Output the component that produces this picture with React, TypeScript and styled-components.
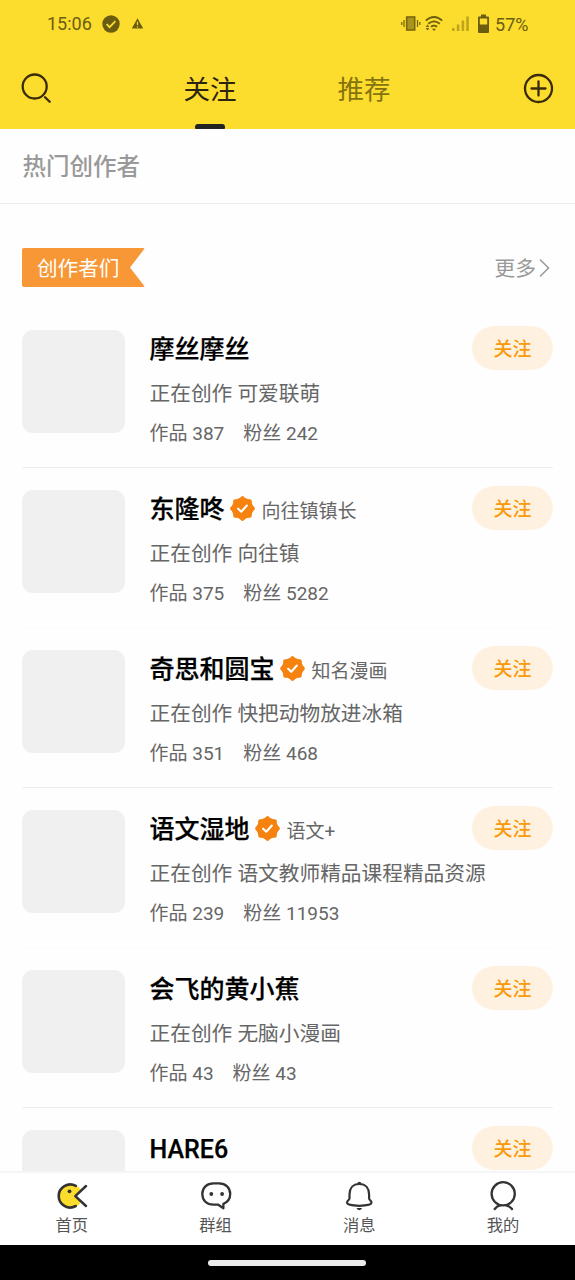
import React from "react";
import styled, { createGlobalStyle } from "styled-components";

const GlobalStyle = createGlobalStyle`
  * { box-sizing: border-box; }
  body {
    margin: 0;
    background: #fff;
    font-family: Roboto, "Noto Sans CJK SC", sans-serif;
  }
`;

const Screen = styled.div`
  width: 575px;
  height: 1280px;
  display: flex;
  flex-direction: column;
  overflow: hidden;
  background: #fefefe;
`;

const Header = styled.header`
  height: 129px;
  flex: none;
  background: #fcdc2c;
`;

const StatusBar = styled.div`
  height: 48px;
  display: flex;
  align-items: center;
  justify-content: space-between;
  padding: 0 47px;
  font-size: 18px;
  line-height: 48px;
  color: #6b5d10;
`;

const StatusLeft = styled.div`
  display: flex;
  align-items: center;
  svg:first-of-type { margin-left: 10.5px; }
  svg:last-of-type { margin-left: 10.5px; }
`;

const StatusRight = styled.div`
  display: flex;
  align-items: center;
`;

const BatteryText = styled.span`
  margin-left: 5px;
  margin-right: -0.5px;
  padding-top: 1px;
`;

const TopNav = styled.div`
  height: 81px;
  display: flex;
  align-items: flex-start;
  justify-content: space-between;
  padding: 0 21px 0 20px;
`;

const IconButton = styled.button`
  width: 34px;
  height: 80px;
  padding: 0;
  border: 0;
  background: none;
  display: flex;
  align-items: center;
`;

const Tabs = styled.nav`
  display: flex;
  gap: 101px;
`;

const Tab = styled.div<{ $active?: boolean }>`
  height: 81px;
  display: flex;
  flex-direction: column;
  align-items: center;
  justify-content: space-between;
  font-size: 26.5px;
  line-height: 83px;
  color: ${(p) => (p.$active ? "#2b2410" : "#84730f")};
`;

const TabLabel = styled.span`
  height: 76px;
`;

const TabBar = styled.i`
  width: 30px;
  height: 5px;
  border-radius: 3px 3px 1px 1px;
  background: #222;
`;

const SectionTitle = styled.h2`
  margin: 0;
  height: 75px;
  flex: none;
  padding: 0 22.5px;
  border-bottom: 1px solid #ededed;
  font-size: 23.5px;
  font-weight: 500;
  line-height: 77px;
  color: #999;
`;

const Feed = styled.main`
  flex: 1;
  min-height: 0;
  overflow: hidden;
  padding: 44px 22px 0;
`;

const GroupHead = styled.div`
  height: 39px;
  margin-bottom: 21px;
  display: flex;
  align-items: center;
  justify-content: space-between;
`;

const Ribbon = styled.div`
  width: 123px;
  height: 39px;
  padding-left: 15px;
  border-radius: 2px;
  background: #f79736;
  clip-path: polygon(0 0, 100% 0, 108px 50%, 100% 100%, 0 100%);
  color: #fff;
  font-size: 20.6px;
  line-height: 43px;
`;

const More = styled.div`
  display: flex;
  align-items: center;
  gap: 3px;
  margin-right: 3px;
  font-size: 20.7px;
  color: #999;
`;

const MoreLabel = styled.span`
  height: 39px;
  line-height: 43px;
`;

const Row = styled.article<{ $line: string }>`
  height: 160px;
  padding-top: 22px;
  display: flex;
  align-items: flex-start;
  border-bottom: 1px solid ${(p) => p.$line};
`;

const Avatar = styled.div`
  width: 103px;
  height: 102.5px;
  flex: none;
  border-radius: 11px;
  background: #f0f0f0;
`;

const Info = styled.div`
  flex: 1;
  min-width: 0;
  margin-left: 24.5px;
  white-space: nowrap;
`;

const NameLine = styled.div`
  height: 37px;
  display: flex;
  align-items: center;
`;

const Name = styled.strong`
  padding-top: 3px;
  font-size: 25px;
  font-weight: 500;
  line-height: 36px;
  color: #000;
  -webkit-text-stroke: 0.25px #000;
`;

const Title = styled.span`
  margin-left: 6px;
  padding-top: 6px;
  font-size: 19px;
  line-height: 32px;
  color: #666;
`;

const Work = styled.div`
  margin-top: 12px;
  font-size: 20.7px;
  line-height: 30px;
  color: #666;
`;

const Stats = styled.div`
  display: flex;
  gap: 19px;
  margin-top: 10px;
  font-size: 19px;
  line-height: 30px;
  color: #666;
`;

const Follow = styled.button`
  width: 81px;
  height: 44px;
  margin-top: -4px;
  padding: 3px 0 0;
  flex: none;
  border: 0;
  border-radius: 22px;
  background: #fff1e0;
  color: #f99a0c;
  font-family: inherit;
  font-size: 19px;
  font-weight: 500;
  line-height: 41px;
`;

const BottomNav = styled.footer`
  height: 74px;
  flex: none;
  display: grid;
  grid-template-columns: repeat(4, 1fr);
  border-top: 2px solid #f6f6f6;
  background: #fff;
`;

const NavItem = styled.div`
  display: flex;
  flex-direction: column;
  align-items: center;
  padding-top: 6px;
  font-size: 16.3px;
  line-height: 26px;
  color: #555;
`;

const HomeBar = styled.div`
  height: 35px;
  flex: none;
  display: flex;
  justify-content: center;
  align-items: center;
  padding-right: 1px;
  background: #000;
`;

const HomePill = styled.i`
  width: 158px;
  height: 6px;
  border-radius: 3px;
  background: #ececec;
`;

const VerifiedSvg = styled.svg`
  margin: 0 -0.5px 0 4.5px;
  flex: none;
`;

const Verified = () => (
  <VerifiedSvg width="27" height="27" viewBox="0 0 26 26">
    <g fill="#f6820f">
      <circle cx="13" cy="13" r="10.300" />
      {Array.from({ length: 8 }, (_, i) => (
        <rect key={i} x="9.700" y="1.700" width="6.600" height="6.600" rx="1.900" transform={`rotate(${i * 45} 13 13) rotate(45 13 5)`} />
      ))}
    </g>
    <path d="m8.800 13.200 3 2.900 5.400-6" fill="none" stroke="#fff" strokeWidth="2" strokeLinecap="round" strokeLinejoin="round" />
  </VerifiedSvg>
);

const HomeIcon = () => (
  <svg width="34" height="34" viewBox="0 0 34 34" fill="none" strokeLinecap="round" strokeLinejoin="round">
    <path d="M20.300 17 26 11.200A12 12 0 1 0 26 22.800Z" fill="#fcdc2c" />
    <path d="M20.800 6.900A11.500 11.500 0 1 0 20.800 27" stroke="#333" strokeWidth="2.600" />
    <path d="M31 7 20.300 17.200 31 27" stroke="#333" strokeWidth="2.500" />
    <circle cx="14.500" cy="12.300" r="1.900" fill="#333" />
  </svg>
);

const GroupIcon = () => (
  <svg width="34" height="34" viewBox="0 0 34 34" fill="none" stroke="#333" strokeWidth="2.3" strokeLinejoin="round">
    <path d="M14.500 4.400H20C26.700 4.400 31.200 8.800 31.200 15.100C31.200 19.500 28.500 23.300 24.400 24.800V29.300L19.300 25.700H14.500C7.800 25.700 3.300 21.400 3.300 15.100C3.300 8.800 7.800 4.400 14.500 4.400Z" />
    <circle cx="12.300" cy="15" r="1.900" fill="#333" stroke="none" />
    <circle cx="23.100" cy="15" r="1.900" fill="#333" stroke="none" />
  </svg>
);

const BellIcon = () => (
  <svg width="34" height="34" viewBox="0 0 34 34" fill="none" stroke="#333" strokeWidth="2.2" strokeLinejoin="round">
    <path d="M17.300 5C10.900 5 7.500 9.500 7.500 15.500V19.500C7.300 21.300 5 21.400 5 23.800C5 25.500 9.500 26.800 17.300 26.800S29.500 25.500 29.500 23.800C29.500 21.400 27.300 21.300 27.100 19.500V15.500C27.100 9.500 23.700 5 17.300 5Z" />
    <path d="M15.300 4.700A2 2 0 0 1 19.300 4.700Z" fill="#333" stroke="none" />
    <path d="M14.500 29H20.100A2.900 2.900 0 0 1 14.500 29Z" fill="#333" stroke="none" />
  </svg>
);

const MeIcon = () => (
  <svg width="34" height="34" viewBox="0 0 34 34" fill="none" stroke="#333" strokeWidth="2.3" strokeLinecap="round">
    <circle cx="17.200" cy="14.800" r="11.600" />
    <path d="M8.700 30Q11 26.900 14.400 26.400M26 30Q23.700 26.900 20 26.400" />
  </svg>
);

const SearchIcon = () => (
  <svg width="34" height="34" viewBox="0 0 34 34" fill="none" stroke="#3a2c0b" strokeWidth="2.300" strokeLinecap="round">
    <circle cx="14.700" cy="15.500" r="12" />
    <path d="m25 26.200 4.700 4.600" />
  </svg>
);

const AddIcon = () => (
  <svg width="34" height="34" viewBox="0 0 34 34" fill="none" stroke="#3a2c0b" strokeWidth="2.300" strokeLinecap="round">
    <circle cx="18.500" cy="17.500" r="13.500" />
    <path d="M11.500 17.500H25.500M18.500 10.500V24.500" />
  </svg>
);

const StatusIconsLeft = () => (
  <>
    <svg width="18" height="18" viewBox="0 0 18 18">
      <circle cx="9" cy="9" r="8.700" fill="#6b5d10" />
      <path d="m4.600 9.200 3 3 5.800-6" fill="none" stroke="#fcdc2c" strokeWidth="1.800" />
    </svg>
    <svg width="13" height="12" viewBox="0 0 13 12">
      <path d="M6.500.3 12.200 10.500H.8Z" fill="#6b5d10" />
      <path d="M6.500 3.700V7M6.500 8.200V9.400" stroke="#fcdc2c" strokeWidth="1.200" />
    </svg>
  </>
);

const StatusIconsRight = () => (
  <svg width="90" height="24" viewBox="0 0 90 24" fill="none">
    <g stroke="#78690f" strokeWidth="1.300">
      <rect x="6.700" y="5" width="8" height="13" fill="#a9941c" strokeWidth="1.600" />
      <path d="M4 8V15M1.700 10V13M17.500 8V15M19.800 10V13" />
    </g>
    <g stroke="#6b5d10" strokeWidth="1.800">
      <path d="M25.800 8.600Q34 1.400 42.200 8.600M28.200 11.800Q34 7 39.800 11.800M31 14.700Q34 12.400 37 14.700" />
    </g>
    <path d="m34 19-2-2.200h4ZM27.500 12.500l1.700 2.500h-3.400ZM27.500 18.500l-1.700-2.500h3.400Z" fill="#6b5d10" />
    <g fill="#bea51d">
      <rect x="52" y="16" width="2.600" height="3" />
      <rect x="56.800" y="12.500" width="2.600" height="6.500" />
      <rect x="61.600" y="8.500" width="2.600" height="10.500" />
      <rect x="66.200" y="4.500" width="2.600" height="14.500" />
    </g>
    <path d="M81 2.600h5v2h2q1 0 1 1v14.400q0 1-1 1H79q-1 0-1-1V5.600q0-1 1-1h2ZM79.800 6.500V12.500H87.200V6.500Z" fill="#6b5d10" fillRule="evenodd" />
  </svg>
);

type Creator = { name: string; title?: string; work?: string; works?: number; fans?: number };

const creators: Creator[] = [
  { name: "摩丝摩丝", work: "可爱联萌", works: 387, fans: 242 },
  { name: "东隆咚", title: "向往镇镇长", work: "向往镇", works: 375, fans: 5282 },
  { name: "奇思和圆宝", title: "知名漫画", work: "快把动物放进冰箱", works: 351, fans: 468 },
  { name: "语文湿地", title: "语文+", work: "语文教师精品课程精品资源", works: 239, fans: 11953 },
  { name: "会飞的黄小蕉", work: "无脑小漫画", works: 43, fans: 43 },
  { name: "HARE6" },
];

const CreatorRow = ({ creator, line }: { creator: Creator; line: string }) => (
  <Row $line={line}>
    <Avatar />
    <Info>
      <NameLine>
        <Name>{creator.name}</Name>
        {creator.title && (
          <>
            <Verified />
            <Title>{creator.title}</Title>
          </>
        )}
      </NameLine>
      {creator.work && (
        <>
          <Work>正在创作 {creator.work}</Work>
          <Stats>
            <span>作品 {creator.works}</span>
            <span>粉丝 {creator.fans}</span>
          </Stats>
        </>
      )}
    </Info>
    <Follow>关注</Follow>
  </Row>
);

export default function App() {
  return (
    <Screen>
      <GlobalStyle />
      <Header>
        <StatusBar>
          <StatusLeft>
            <span>15:06</span>
            <StatusIconsLeft />
          </StatusLeft>
          <StatusRight>
            <StatusIconsRight />
            <BatteryText>57%</BatteryText>
          </StatusRight>
        </StatusBar>
        <TopNav>
          <IconButton aria-label="搜索"><SearchIcon /></IconButton>
          <Tabs>
            <Tab $active>
              <TabLabel>关注</TabLabel>
              <TabBar />
            </Tab>
            <Tab>
              <TabLabel>推荐</TabLabel>
            </Tab>
          </Tabs>
          <IconButton aria-label="发布"><AddIcon /></IconButton>
        </TopNav>
      </Header>
      <SectionTitle>热门创作者</SectionTitle>
      <Feed>
        <GroupHead>
          <Ribbon>创作者们</Ribbon>
          <More>
            <MoreLabel>更多</MoreLabel>
            <svg width="11" height="20" viewBox="0 0 11 20" fill="none" stroke="#999" strokeWidth="1.500">
              <path d="m1 1.500 8.500 8.500L1 18.500" />
            </svg>
          </More>
        </GroupHead>
        {creators.map((c, i) => (
          <CreatorRow key={c.name} creator={c} line={i % 2 ? "#fbfbfb" : "#eeeeee"} />
        ))}
      </Feed>
      <BottomNav>
        <NavItem><HomeIcon />首页</NavItem>
        <NavItem><GroupIcon />群组</NavItem>
        <NavItem><BellIcon />消息</NavItem>
        <NavItem><MeIcon />我的</NavItem>
      </BottomNav>
      <HomeBar><HomePill /></HomeBar>
    </Screen>
  );
}
